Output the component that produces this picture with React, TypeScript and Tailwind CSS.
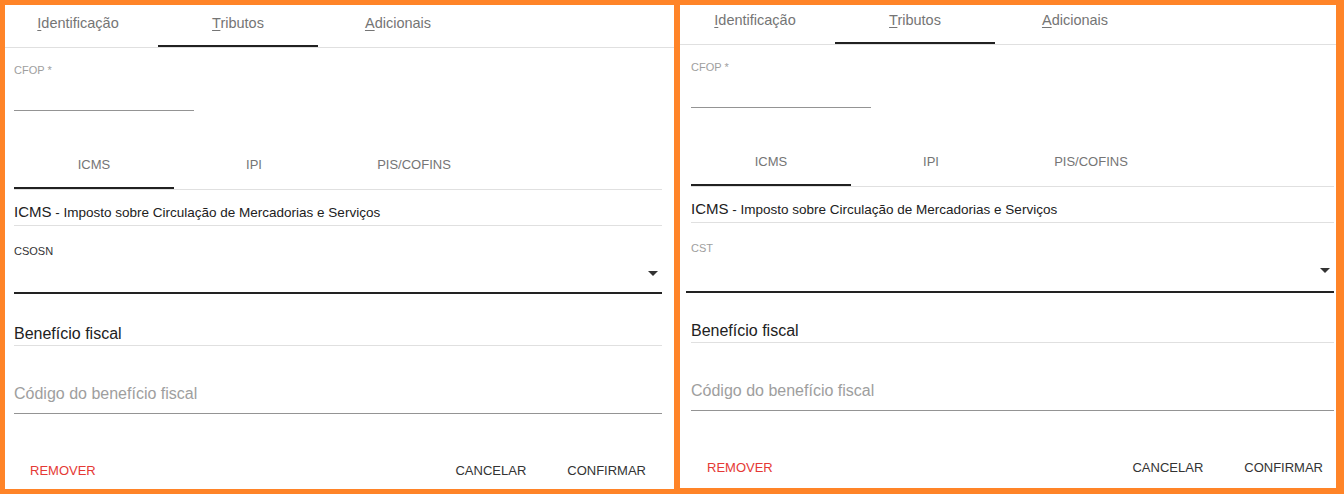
import React from "react";

type PanelProps = {
  width: string;
  height: string;
  shift: string;
  tabsShift: string;
  pad: string;
  selectShift: string;
  selectHeight: string;
  beneficioTop: string;
  selectLabel: string;
  labelClass: string;
  actionsPad: string;
};

const mainTabs = [
  { key: "I", rest: "dentificação" },
  { key: "T", rest: "ributos", active: true },
  { key: "A", rest: "dicionais" },
];

const taxTabs = [
  { label: "ICMS", active: true },
  { label: "IPI" },
  { label: "PIS/COFINS" },
];

function Panel(p: PanelProps) {
  return (
    <div className={`${p.width} ${p.height} mt-[5px] overflow-hidden bg-white`}>
      <div className={`${p.shift} flex flex-col`}>
        {/* top tabs */}
        <div className="h-[43px] border-b border-[#e0e0e0]">
          <div className={`flex ${p.tabsShift}`}>
            {mainTabs.map((t) => (
              <div key={t.key} className="relative h-[42px] w-[160px] pt-[8px] text-center text-[14.5px] leading-5 text-[#757575]">
                <span className="underline underline-offset-2">{t.key}</span>
                {t.rest}
                {t.active && <div className="absolute bottom-0 left-0 h-[2px] w-full bg-[#212121]" />}
              </div>
            ))}
          </div>
        </div>

        <div className={`flex flex-col ${p.pad}`}>
          <div className="mt-[15px] text-[11px] leading-[14px] text-[#9e9e9e]">CFOP *</div>
          <div className="h-[34px] w-[180px] border-b border-[#949494]" />

          {/* tax tabs */}
          <div className="mt-[30px] flex h-[49px] border-b border-[#e0e0e0]">
            {taxTabs.map((t) => (
              <div key={t.label} className="relative flex h-[48px] w-[160px] items-center justify-center text-[13px] text-[#757575]">
                {t.label}
                {t.active && <div className="absolute bottom-0 left-0 h-[2px] w-full bg-[#212121]" />}
              </div>
            ))}
          </div>

          <div className="flex h-[36px] items-baseline overflow-hidden border-b border-[#e0e0e0] pt-[12px] leading-5 text-[#212121]">
            <span className="text-[15px]">ICMS</span>
            <span className="whitespace-pre text-[13.5px]"> - Imposto sobre Circulação de Mercadorias e Serviços</span>
          </div>

          <div className={`mt-[18px] text-[11px] leading-[14px] ${p.labelClass}`}>{p.selectLabel}</div>
          <div className={`${p.selectShift} ${p.selectHeight} flex justify-end border-b-2 border-[#222] pr-[4px] pt-[13px]`}>
            <svg width="10" height="5" viewBox="0 0 10 5">
              <path d="M0 0h10L5 5z" fill="#333" />
            </svg>
          </div>

          <div className={`${p.beneficioTop} h-[22px] border-b border-[#e0e0e0] text-[16px] leading-5 text-[#212121]`}>
            Benefício fiscal
          </div>

          <div className="flex h-[68px] items-end border-b border-[#949494] pb-[9px] text-[16px] leading-5 text-[#9e9e9e]">
            Código do benefício fiscal
          </div>

          <div className={`mt-[45px] flex items-center text-[13px] leading-6 ${p.actionsPad}`}>
            <span className="px-[16px] text-[#e53935]">REMOVER</span>
            <span className="ml-auto px-[16px] text-[#333]">CANCELAR</span>
            <span className="ml-[9px] px-[16px] text-[#333]">CONFIRMAR</span>
          </div>
        </div>
      </div>
    </div>
  );
}

export default function App() {
  return (
    <div
      className="flex h-[494px] w-[1344px] gap-[6px] overflow-hidden bg-[#ff8428] pl-[5px]"
      style={{ fontFamily: '"Liberation Sans", Arial, sans-serif' }}
    >
      <Panel
        width="w-[669px]"
        height="h-[484px]"
        shift="mt-0"
        tabsShift="ml-[-7px]"
        pad="pl-[9px] pr-[12px]"
        selectShift="ml-0"
        selectHeight="h-[36px]"
        beneficioTop="mt-[30px]"
        selectLabel="CSOSN"
        labelClass="text-[#333]"
        actionsPad="pr-0"
      />
      <Panel
        width="w-[656px]"
        height="h-[483px]"
        shift="mt-[-3px]"
        tabsShift="ml-[-5px]"
        pad="pl-[11px] pr-[2px]"
        selectShift="ml-[-5px]"
        selectHeight="h-[38px]"
        beneficioTop="mt-[28px]"
        selectLabel="CST"
        labelClass="text-[#9e9e9e]"
        actionsPad="mr-[-5px]"
      />
    </div>
  );
}
